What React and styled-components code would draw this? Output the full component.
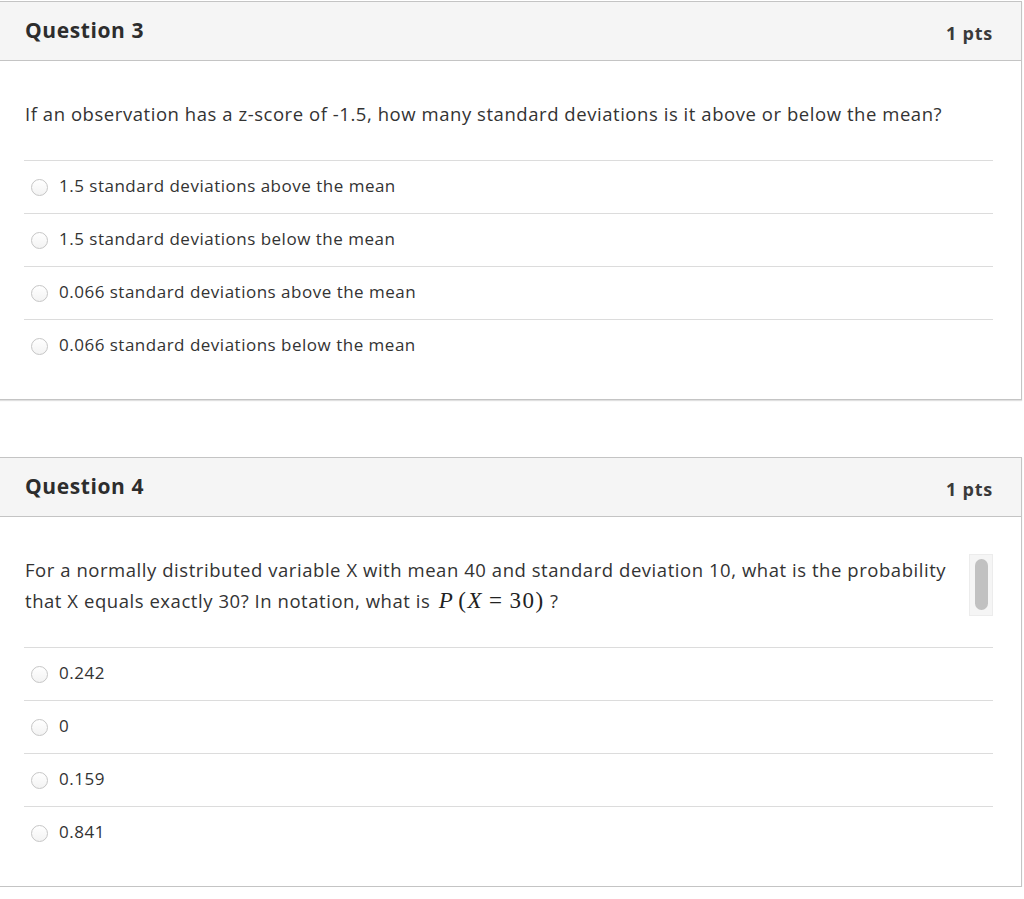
import React from 'react'
import styled, { createGlobalStyle } from 'styled-components'

const GlobalStyle = createGlobalStyle`
  html, body {
    margin: 0;
    padding: 0;
    background: #fff;
  }
  body {
    font-family: "Open Sans", "Noto Sans", sans-serif;
    color: #333;
  }
`

const questions = [
  {
    id: 3,
    points: '1 pts',
    text: 'If an observation has a z-score of -1.5, how many standard deviations is it above or below the mean?',
    answers: [
      '1.5 standard deviations above the mean',
      '1.5 standard deviations below the mean',
      '0.066 standard deviations above the mean',
      '0.066 standard deviations below the mean'
    ]
  },
  {
    id: 4,
    points: '1 pts',
    math: true,
    answers: ['0.242', '0', '0.159', '0.841']
  }
]

const MathExpr = () => (
  <StyledMath>
    <i>P</i>
    <span className='paren'>(</span>
    <i>X</i>
    <span className='op'>=</span>
    30)
  </StyledMath>
)

const Question = ({ id, points, text, math, answers }) => (
  <StyledCard>
    <StyledHeader>
      <h2>Question {id}</h2>
      <span className='pts'>{points}</span>
    </StyledHeader>
    <StyledBody>
      <StyledPrompt>
        {math ? (
          <p>
            For a normally distributed variable X with mean 40 and standard deviation 10, what is the probability
            <br />
            that X equals exactly 30? In notation, what is <MathExpr /> ?
          </p>
        ) : (
          <p>{text}</p>
        )}
        {math && (
          <StyledScroll>
            <div className='thumb' />
          </StyledScroll>
        )}
      </StyledPrompt>
      <StyledAnswers>
        {answers.map(a => (
          <StyledAnswer key={a}>
            <Radio />
            <span>{a}</span>
          </StyledAnswer>
        ))}
      </StyledAnswers>
    </StyledBody>
  </StyledCard>
)

const App = () => (
  <>
    <GlobalStyle />
    <StyledPage>
      {questions.map(q => (
        <Question key={q.id} {...q} />
      ))}
    </StyledPage>
  </>
)

export default App

const StyledPage = styled.div`
  width: 1022px;
  padding-top: 1px;
  display: flex;
  flex-direction: column;
  gap: 57px;
`

const StyledCard = styled.div`
  border: 1px solid #c4c4c4;
  border-left: none;
  box-shadow: 0 1px 1px rgba(0, 0, 0, 0.12);
  background: #fff;
`

const StyledHeader = styled.div`
  height: 58px;
  background: #f5f5f5;
  border-bottom: 1px solid #c4c4c4;
  display: flex;
  justify-content: space-between;
  padding: 0 28px 0 25px;
  h2 {
    margin: 0;
    padding-top: 15px;
    font-size: 21px;
    font-weight: 700;
    letter-spacing: 0.6px;
    line-height: 26px;
    color: #2d2d2d;
  }
  .pts {
    padding-top: 20px;
    font-size: 18px;
    font-weight: 700;
    letter-spacing: 0.8px;
    line-height: 22px;
    color: #3a3a3a;
  }
`

const StyledBody = styled.div`
  padding: 37px 28px 27px 24px;
`

const StyledPrompt = styled.div`
  display: flex;
  justify-content: space-between;
  align-items: flex-start;
  padding-left: 1px;
  margin-bottom: 31px;
  p {
    margin: 0;
    font-size: 18.5px;
    letter-spacing: 0.55px;
    line-height: 31px;
    color: #333;
  }
`

const StyledMath = styled.span`
  font-family: "Liberation Serif", "Times New Roman", serif;
  font-size: 23px;
  line-height: 1;
  letter-spacing: 1.5px;
  margin-left: 3px;
  color: #222;
  i {
    font-style: italic;
  }
  .paren {
    margin-left: 4px;
  }
  .op {
    margin: 0 6px;
  }
`

const StyledScroll = styled.div`
  width: 24px;
  height: 62px;
  background: #f5f5f5;
  border: 1px solid #ececec;
  box-sizing: border-box;
  display: flex;
  justify-content: center;
  padding-top: 4px;
  .thumb {
    width: 13px;
    height: 51px;
    border-radius: 7px;
    background: #c1c1c1;
  }
`

const StyledAnswers = styled.div`
  display: flex;
  flex-direction: column;
`

const StyledAnswer = styled.div`
  height: 52px;
  border-top: 1px solid #dcdcdc;
  display: flex;
  align-items: center;
  gap: 11px;
  padding-left: 7px;
  font-size: 17px;
  letter-spacing: 0.5px;
  color: #333;
  span:last-child {
    padding-bottom: 3px;
  }
`

const Radio = styled.span`
  width: 17px;
  height: 17px;
  box-sizing: border-box;
  border-radius: 50%;
  border: 1px solid #c6c6c6;
  background: linear-gradient(#ffffff, #f3f3f3);
  flex-shrink: 0;
`
